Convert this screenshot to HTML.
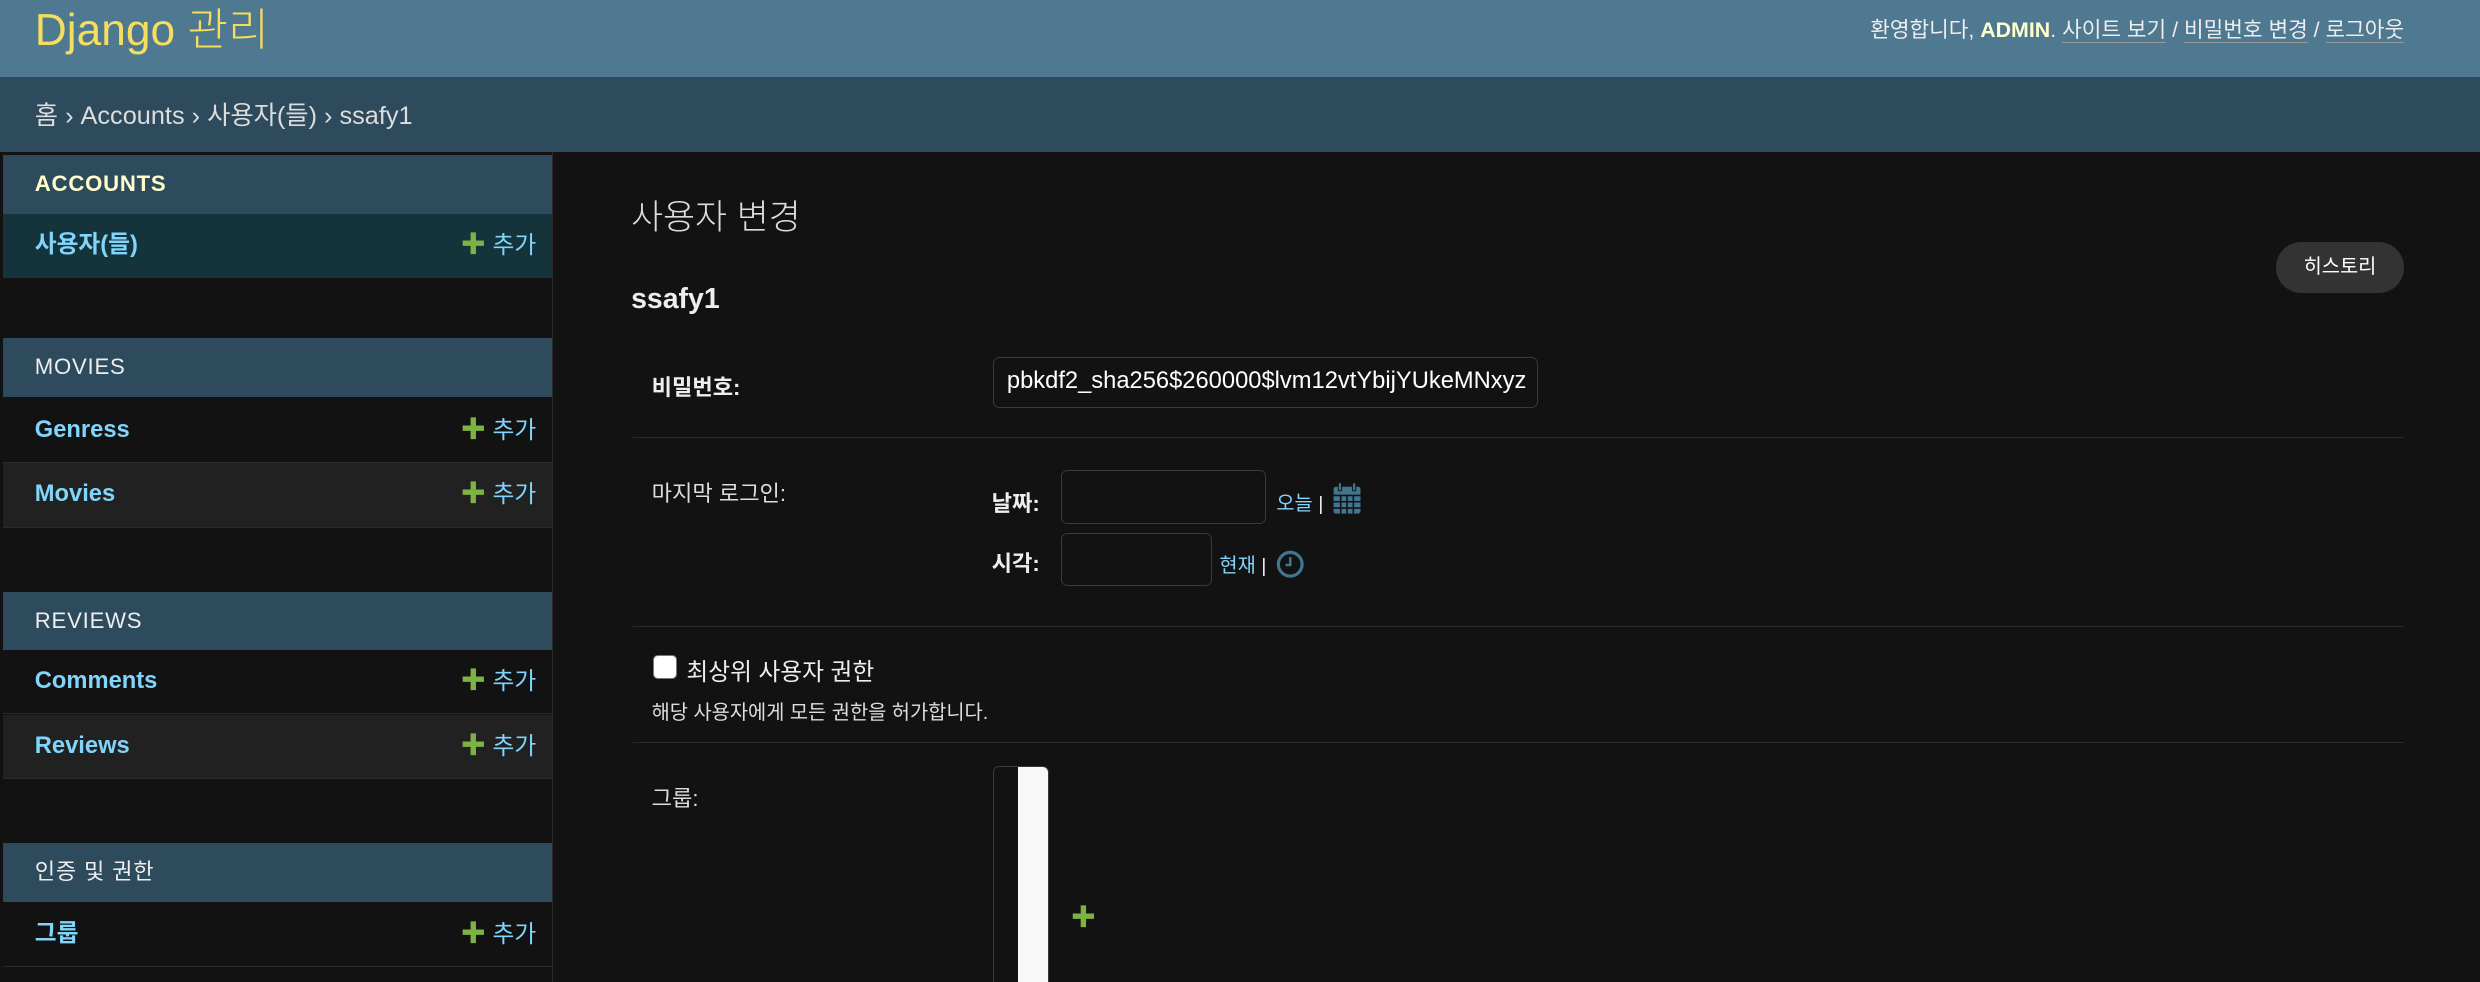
<!DOCTYPE html>
<html><head><meta charset="utf-8"><style>
html,body{margin:0;padding:0;background:#121212;overflow:hidden}
body{width:2480px;height:982px}
#z{zoom:1.58163;width:1568px;height:621px;position:relative;overflow:hidden;font-family:"Liberation Sans","Noto Sans CJK KR",sans-serif;color:#eee}
.a{position:absolute;white-space:nowrap}
#hdr{left:0;top:0;width:1568px;height:49px;background:#4f7891}
#bc{left:0;top:49px;width:1568px;height:47px;background:#2e4a5d}
#side{left:0;top:96px;width:349px;height:525px;border-right:1px solid #2a2a2a;background:#121212}
.cap{position:absolute;left:2px;width:347px;height:37px;background:#2e4a5d;font-size:14px;line-height:37px;text-indent:20px;color:#eee;letter-spacing:.5px}
.row{position:absolute;left:2px;width:347px;height:40px;border-bottom:1px solid #2a2a2a;font-size:15px;font-weight:bold;line-height:40px;text-indent:20px;color:#81d4fa}
.row.alt{background:#212121}
.row .add{position:absolute;right:10px;top:0;font-weight:normal;color:#81d4fa;text-indent:0}
.plus{color:#7cb342;font-weight:bold;font-size:16px}
hr.s{position:absolute;left:400px;width:1120px;border:0;border-top:1px solid #2a2a2a;margin:0}
.inp{position:absolute;border:1px solid #3a3a3a;border-radius:4px;background:#121212}
</style></head><body><div id="z">
<div class="a" id="hdr"></div>
<div class="a" style="left:22px;top:-4px;font-size:28px;color:#f5dd5d;font-weight:300">Django 관리</div>
<div class="a" style="right:48px;top:8px;font-size:13.5px;color:#eee">환영합니다, <b style="color:#ffffcc">ADMIN</b>. <span style="border-bottom:1px solid #999">사이트 보기</span> / <span style="border-bottom:1px solid #999">비밀번호 변경</span> / <span style="border-bottom:1px solid #999">로그아웃</span></div>
<div class="a" id="bc"></div>
<div class="a" style="left:22px;top:61px;font-size:16px;color:#ddd">홈 › Accounts › 사용자(들) › ssafy1</div>
<div class="a" id="side">
 <div class="cap" style="top:2px;font-weight:bold;color:#ffffcc">ACCOUNTS</div>
 <div class="row" style="top:39px;background:#15333a">사용자(들)<span class="add"><span class="plus">✚</span> 추가</span></div>
 <div class="cap" style="top:118px">MOVIES</div>
 <div class="row" style="top:156px">Genress<span class="add"><span class="plus">✚</span> 추가</span></div>
 <div class="row alt" style="top:197px">Movies<span class="add"><span class="plus">✚</span> 추가</span></div>
 <div class="cap" style="top:278px">REVIEWS</div>
 <div class="row" style="top:315px">Comments<span class="add"><span class="plus">✚</span> 추가</span></div>
 <div class="row alt" style="top:356px">Reviews<span class="add"><span class="plus">✚</span> 추가</span></div>
 <div class="cap" style="top:437px">인증 및 권한</div>
 <div class="row" style="top:475px">그룹<span class="add"><span class="plus">✚</span> 추가</span></div>
</div>
<div class="a" style="left:399px;top:120px;font-size:22px;color:#ddd;font-weight:300">사용자 변경</div>
<div class="a" style="left:1439px;top:153px;width:81px;height:32px;border-radius:16px;background:#333;font-size:12.5px;line-height:32px;text-align:center;color:#fff">히스토리</div>
<div class="a" style="left:399px;top:179px;font-size:18px;font-weight:bold;color:#eee">ssafy1</div>
<div class="a" style="left:412px;top:234px;font-size:14px;font-weight:bold">비밀번호:</div>
<div class="inp" style="left:628px;top:226px;width:343px;height:31px;overflow:hidden"><div class="a" style="left:8px;top:6px;font-size:15px;color:#fff">pbkdf2_sha256$260000$lvm12vtYbijYUkeMNxyz</div></div>
<hr class="s" style="top:276px">
<div class="a" style="left:412px;top:301px;font-size:14px;color:#ddd">마지막 로그인:</div>
<div class="a" style="left:627px;top:307px;font-size:14px;font-weight:bold">날짜:</div>
<div class="inp" style="left:671px;top:297px;width:128px;height:33px"></div>
<div class="a" style="left:807px;top:308px;font-size:12.5px;color:#81d4fa">오늘 <span style="color:#eee">|</span></div>
<svg class="a" style="left:842px;top:305px" width="19" height="21" viewBox="0 0 19 21"><rect x="1" y="3" width="17" height="17" rx="1.5" fill="#417690"/><rect x="4" y="0.5" width="2" height="5" fill="#417690" stroke="#121212" stroke-width=".6"/><rect x="13" y="0.5" width="2" height="5" fill="#417690" stroke="#121212" stroke-width=".6"/><g stroke="#121212" stroke-width="1"><path d="M1 8.5h17M1 12.5h17M1 16.5h17M5.5 8v12M9.5 8v12M13.5 8v12"/></g></svg>
<div class="a" style="left:627px;top:345px;font-size:14px;font-weight:bold">시각:</div>
<div class="inp" style="left:671px;top:337px;width:94px;height:32px"></div>
<div class="a" style="left:771px;top:347px;font-size:12.5px;color:#81d4fa">현재 <span style="color:#eee">|</span></div>
<svg class="a" style="left:807px;top:348px" width="18" height="18" viewBox="0 0 18 18"><circle cx="9" cy="9" r="7.5" fill="none" stroke="#417690" stroke-width="2"/><path d="M9 4.5v5h-3" fill="none" stroke="#417690" stroke-width="1.6"/></svg>
<hr class="s" style="top:396px">
<div class="a" style="left:413px;top:414px;width:14px;height:14px;background:#fff;border:1px solid #777;border-radius:3px"></div>
<div class="a" style="left:434px;top:412px;font-size:15px;color:#eee">최상위 사용자 권한</div>
<div class="a" style="left:412px;top:440px;font-size:12.5px;color:#ddd">해당 사용자에게 모든 권한을 허가합니다.</div>
<hr class="s" style="top:469px">
<div class="a" style="left:412px;top:494px;font-size:14px;color:#ddd">그룹:</div>
<div class="inp" style="left:628px;top:484px;width:34px;height:150px;overflow:hidden"><div class="a" style="left:15px;top:0;width:19px;height:150px;background:#f8f8f8"></div></div>
<div class="a" style="left:677px;top:568px;font-size:16px;color:#7cb342;font-weight:bold">✚</div>
</div></body></html>
